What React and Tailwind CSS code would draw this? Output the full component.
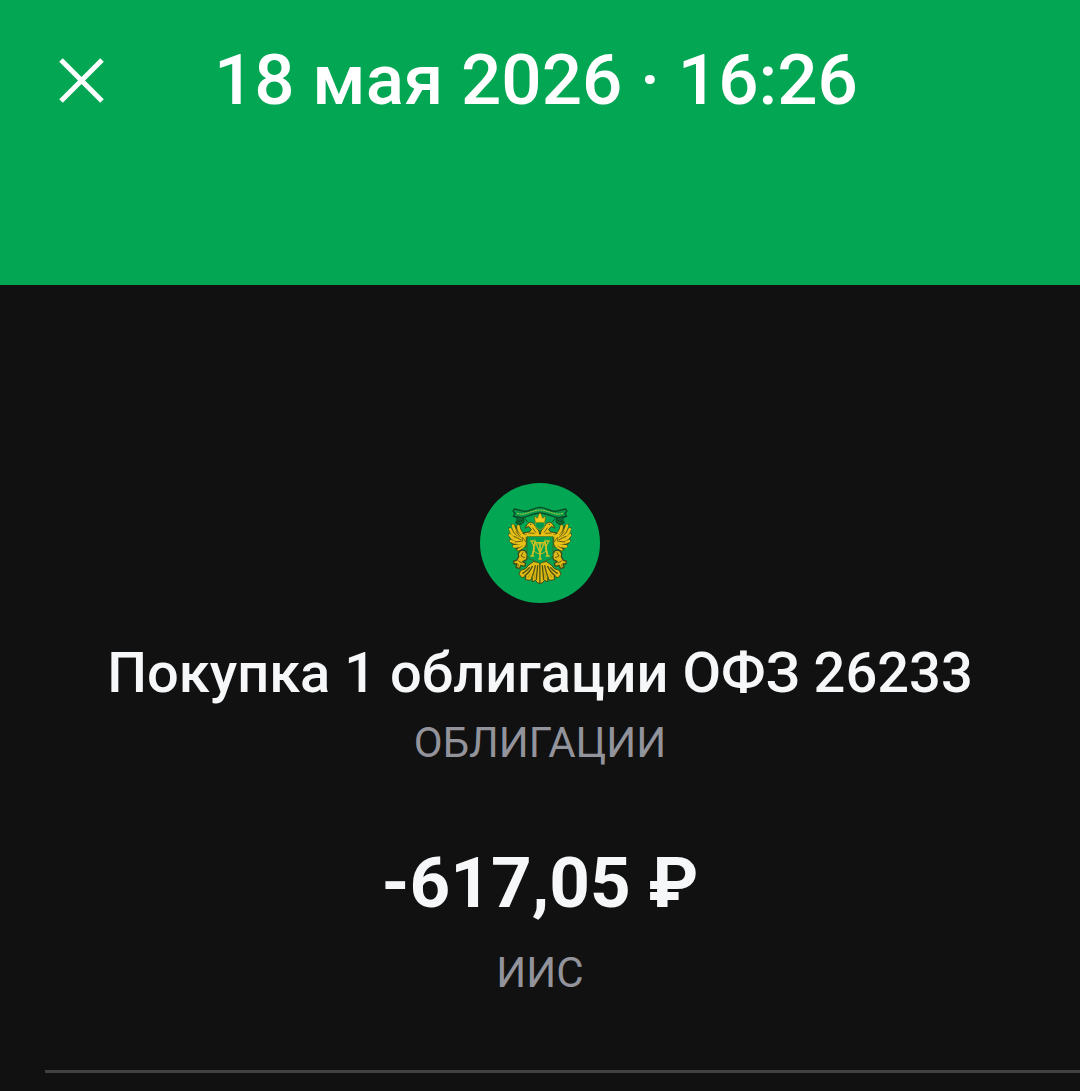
import React from "react";

// One half of the emblem; the other one is the same drawing mirrored.
function EmblemHalf() {
  return (
    <g strokeLinecap="round" strokeLinejoin="round">
      {/* Ribbon */}
      <path
        d="M210 103 C188 104 182 115 164 115 L133 108 L129 114 L135 122 L130 130 L152 134 C170 136 184 121 210 120"
        fill="#05984a"
        stroke="#0b4a26"
        strokeWidth="4"
      />
      <path d="M142 121 C162 130 180 113 210 111" fill="none" stroke="#8fc23f" strokeWidth="4" strokeDasharray="3 5" />
      <path d="M135 131 L142 140 L137 149 L150 156 L162 147 L160 136 Z" fill="#0b6a34" stroke="#0b4a26" strokeWidth="3" />
      <path d="M164 137 L172 146 M144 146 L156 142" fill="none" stroke="#0b4a26" strokeWidth="3" />

      {/* Wing feathers */}
      <path
        d="M165 183 C156 179 151 171 149 159 L143 154 L140 166 L134 156 L125 154 L129 170 L117 164 L121 180 L129 186 L115 182 L120 195 L130 200 L118 201 L126 213 L136 214 L127 219 L137 227 L144 222 L139 231 L151 234 L157 226 L168 220 L169 196 L180 189 Z"
        fill="#6d6714"
        stroke="#3b4f1a"
        strokeWidth="3"
      />
      <g fill="none" stroke="#e8c016" strokeWidth="8">
        <path d="M129 158 C131 172 138 182 152 190" />
        <path d="M121 169 C125 183 136 193 152 197" />
        <path d="M120 186 C126 196 138 203 154 203" />
        <path d="M123 204 C132 210 144 211 157 208" />
        <path d="M132 220 C142 221 152 218 161 212" />
        <path d="M145 230 C153 228 159 222 163 217" strokeWidth="6" />
        <path d="M145 160 C146 174 154 184 167 188" />
      </g>
      <path d="M155 189 L176 187 M163 192 L163 212" fill="none" stroke="#e8c016" strokeWidth="9" />
      <path d="M138 176 L152 193 M133 190 L153 200 M136 207 L158 204 M158 194 L167 206" fill="none" stroke="#66610f" strokeWidth="3" />

      {/* Head and neck */}
      <path
        d="M166 164 L172 154 C177 145 188 147 192 154 L199 164 L207 174 L210 188 L171 187 L158 180 L178 177 L184 170 L177 161 Z"
        fill="#e8c016"
        stroke="#3f4a12"
        strokeWidth="3"
      />
      <path d="M188 165 L197 178 M177 180 L193 181" fill="none" stroke="#6d6612" strokeWidth="3" />
      <circle cx="182" cy="154" r="2" fill="#28320e" />

      {/* Leg and sceptre */}
      <path
        d="M155 231 C144 235 144 244 146 251 L140 262 L131 264 L132 273 L140 272 L138 283 L149 287 L152 277 L164 280 L167 271 L158 266 L170 260 L172 244 L165 233 Z"
        fill="#e0b915"
        stroke="#3b4f1a"
        strokeWidth="4"
      />
      <path d="M159 239 L153 249 L164 254 M146 264 L156 270 M144 274 L144 280" fill="none" stroke="#66610f" strokeWidth="3" />

      {/* Tail feathers */}
      <path
        d="M207 268 L190 266 L177 275 L167 287 L152 292 L147 304 L156 314 L168 310 L166 320 L180 322 L187 315 L186 326 L197 322 L203 330 L210 331 L210 270 Z"
        fill="#e3bb15"
        stroke="#3b4f1a"
        strokeWidth="3"
      />
      <path
        d="M187 280 C180 294 172 303 165 308 M196 278 C193 295 189 306 185 315 M203 278 L199 319 M178 284 C172 293 165 297 158 301"
        fill="none"
        stroke="#4f5512"
        strokeWidth="4"
      />
      <path d="M180 303 L175 313 M196 303 L192 316" fill="none" stroke="#8b7d12" strokeWidth="2" />
    </g>
  );
}

function MinistryEmblem() {
  return (
    <svg className="size-[120px] rounded-full bg-[#02a653]" viewBox="30 30 360 360" role="img" aria-label="ОФЗ">
      <EmblemHalf />
      <g transform="translate(420 0) scale(-1 1)">
        <EmblemHalf />
      </g>

      {/* Crown */}
      <path
        d="M196 149 L193 129 L202 136 L206 125 L210 119 L214 125 L218 136 L227 129 L224 149 Z"
        fill="#f0ca18"
        stroke="#5c6414"
        strokeWidth="2"
      />
      <path d="M198 148 L222 148 L225 158 L219 166 L210 170 L201 166 L195 158 Z" fill="#009c4c" stroke="#b8a51a" strokeWidth="2" />

      {/* Shield */}
      <path
        d="M171 190 H249 V244 C249 258 236 260 224 264 L210 272 L196 264 C184 260 171 258 171 244 Z"
        fill="#02a350"
        stroke="#416d20"
        strokeWidth="3"
      />
      <path d="M165 187 H255" fill="none" stroke="#e8c016" strokeWidth="5" />

      {/* Monogram */}
      <g fill="none" stroke="#d2c022" strokeWidth="4">
        <path d="M181 204 H192 M228 204 H239 M181 249 H193 M227 249 H239" />
        <path d="M187 249 L195 204 L210 240 L225 204 L233 249" />
        <path d="M184 206 C194 218 194 234 186 247 M236 206 C226 218 226 234 234 247" />
        <path d="M210 207 V258" strokeWidth="5" />
        <path d="M198 209 H222 M205 258 H215" />
        <ellipse cx="210" cy="227" rx="20" ry="15" strokeWidth="3" />
      </g>
    </svg>
  );
}

export default function App() {
  return (
    <div className="flex min-h-screen flex-col bg-[#111111] font-['Roboto',sans-serif] text-[#f6f7f8]">
      <header className="flex items-start bg-[#02a653] pt-10 pb-[165px] pl-[59px] text-white">
        <button type="button" aria-label="Закрыть" className="mt-[18px] size-[45px] shrink-0">
          <svg className="size-full" viewBox="0 0 45 45" fill="none" stroke="currentColor" strokeWidth="5">
            <path d="M2 2 L43 43 M43 2 L2 43" />
          </svg>
        </button>
        <h1 className="ml-[110px] text-[71px] leading-[80px] font-medium">18 мая 2026 · 16:26</h1>
      </header>

      <main className="flex flex-col items-center pt-[198px] text-center">
        <MinistryEmblem />
        <h2 className="mt-[34px] text-[56px] leading-[72px] font-medium">Покупка 1 облигации ОФЗ 26233</h2>
        <p className="mt-[6px] text-[42px] leading-[56px] text-[#92939b]">ОБЛИГАЦИИ</p>
        <p className="mt-[72px] text-[71px] leading-[80px] font-bold">-617,05 ₽</p>
        <p className="mt-[22px] text-[42px] leading-[56px] text-[#92939b]">ИИС</p>
        <hr className="mt-[69px] ml-[45px] self-stretch border-t-[3px] border-[#414141]" />
      </main>
    </div>
  );
}
